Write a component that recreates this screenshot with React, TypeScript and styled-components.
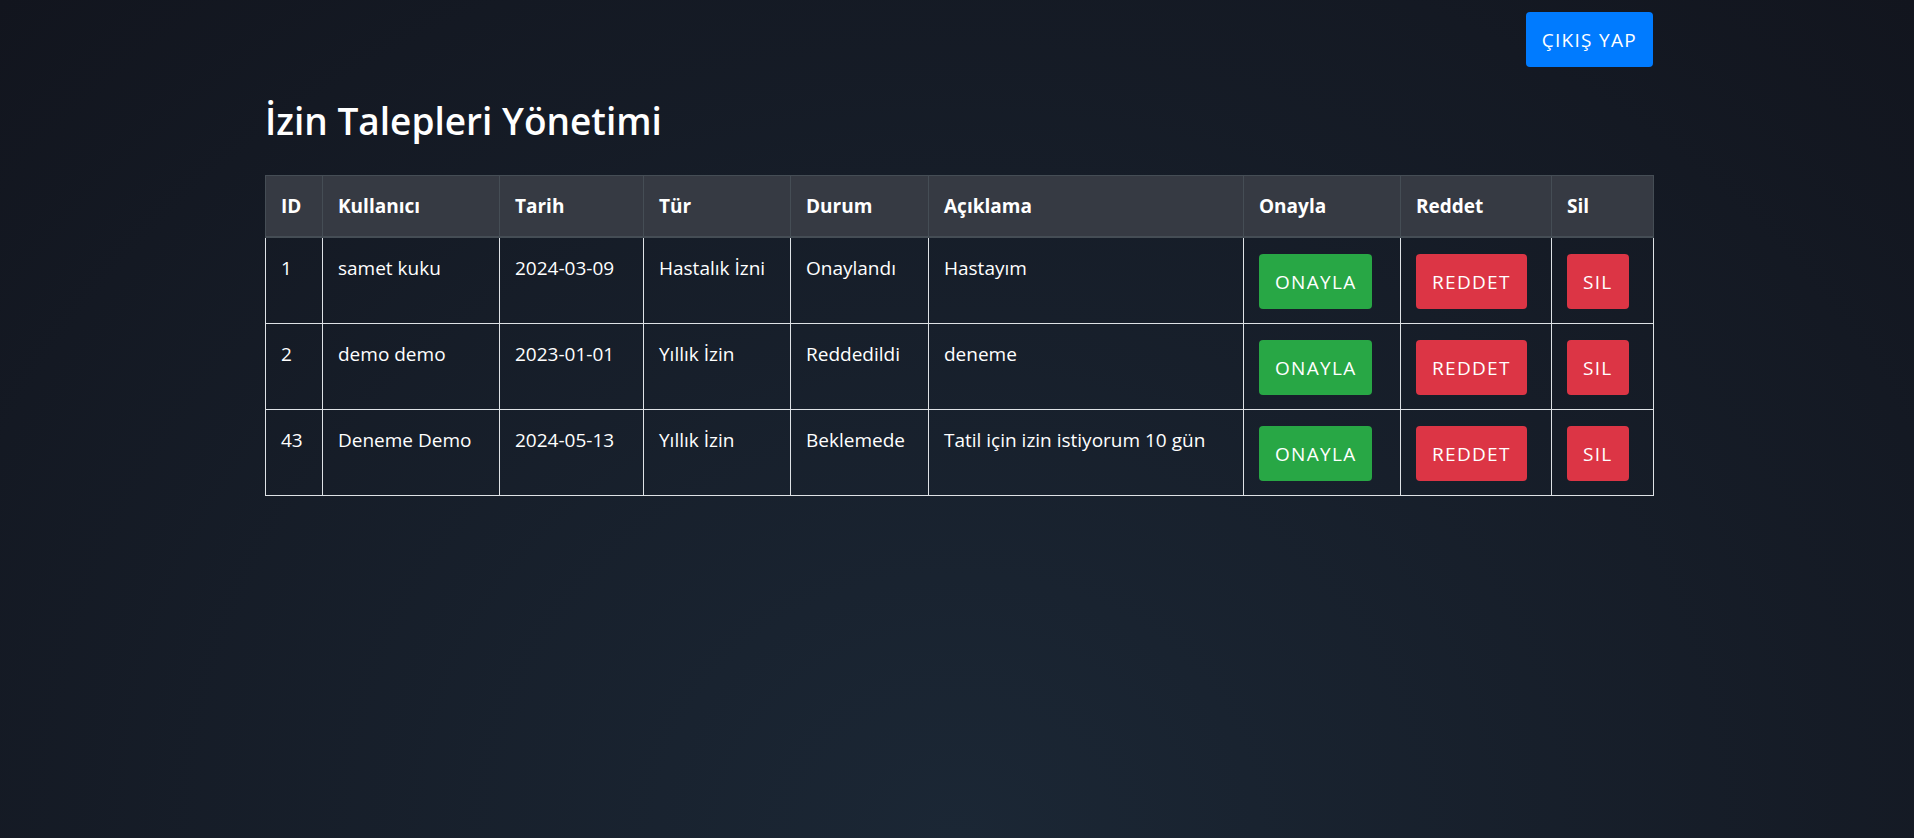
import React from "react";
import styled, { createGlobalStyle } from "styled-components";

const GlobalStyle = createGlobalStyle`
  html, body {
    margin: 0;
    padding: 0;
    min-height: 100%;
  }
  body {
    min-height: 838px;
    background: radial-gradient(ellipse at bottom, #1b2735 0%, #12151e 100%);
    background-attachment: fixed;
    color: #ffffff;
    font-family: "Open Sans", "Noto Sans", "Liberation Sans", sans-serif;
  }
`;

const Page = styled.div`
  width: 1388px;
  margin: 0 auto;
  padding: 12px 0 0 4px;
`;

const TopBar = styled.div`
  display: flex;
  justify-content: flex-end;
`;

const Title = styled.h1`
  margin: 30px 0 30px 0;
  font-size: 37px;
  font-weight: 600;
  line-height: 48px;
  color: #ffffff;
`;

const Table = styled.table`
  width: 1388px;
  border-collapse: collapse;
  table-layout: fixed;
  font-size: 19px;
  line-height: 28px;
`;

const HeadCell = styled.th`
  background: #363a43;
  border: 1px solid #454d55;
  border-bottom: 2px solid #454d55;
  padding: 16px 15px;
  height: 28px;
  text-align: left;
  font-weight: 700;
  color: #ffffff;
  vertical-align: middle;
`;

const Cell = styled.td`
  border: 1px solid #dee2e6;
  padding: 16px 15px 14px;
  height: 55px;
  vertical-align: top;
  color: #ffffff;
  white-space: nowrap;
`;

const Button = styled.button<{ $tone: "blue" | "green" | "red" }>`
  display: inline-flex;
  align-items: center;
  justify-content: center;
  height: 55px;
  padding: 0 16px;
  border: none;
  border-radius: 4px;
  font-family: "Open Sans", "Noto Sans", sans-serif;
  font-size: 19px;
  letter-spacing: 1.3px;
  text-transform: uppercase;
  color: #ffffff;
  cursor: pointer;
  background: ${(p) =>
    p.$tone === "blue" ? "#007bff" : p.$tone === "green" ? "#28a745" : "#dc3545"};
`;

const columns = [
  { label: "ID", width: 57 },
  { label: "Kullanıcı", width: 177 },
  { label: "Tarih", width: 144 },
  { label: "Tür", width: 147 },
  { label: "Durum", width: 138 },
  { label: "Açıklama", width: 315 },
  { label: "Onayla", width: 157 },
  { label: "Reddet", width: 151 },
  { label: "Sil", width: 102 },
];

const rows = [
  { id: 1, user: "samet kuku", date: "2024-03-09", type: "Hastalık İzni", status: "Onaylandı", desc: "Hastayım" },
  { id: 2, user: "demo demo", date: "2023-01-01", type: "Yıllık İzin", status: "Reddedildi", desc: "deneme" },
  { id: 43, user: "Deneme Demo", date: "2024-05-13", type: "Yıllık İzin", status: "Beklemede", desc: "Tatil için izin istiyorum 10 gün" },
];

export default function App() {
  return (
    <>
      <GlobalStyle />
      <Page>
        <TopBar>
          <Button $tone="blue">Çıkış Yap</Button>
        </TopBar>
        <Title>İzin Talepleri Yönetimi</Title>
        <Table>
          <colgroup>
            {columns.map((c) => (
              <col key={c.label} style={{ width: c.width }} />
            ))}
          </colgroup>
          <thead>
            <tr>
              {columns.map((c) => (
                <HeadCell key={c.label}>{c.label}</HeadCell>
              ))}
            </tr>
          </thead>
          <tbody>
            {rows.map((r) => (
              <tr key={r.id}>
                <Cell>{r.id}</Cell>
                <Cell>{r.user}</Cell>
                <Cell>{r.date}</Cell>
                <Cell>{r.type}</Cell>
                <Cell>{r.status}</Cell>
                <Cell>{r.desc}</Cell>
                <Cell>
                  <Button $tone="green">Onayla</Button>
                </Cell>
                <Cell>
                  <Button $tone="red">Reddet</Button>
                </Cell>
                <Cell>
                  <Button $tone="red">Sil</Button>
                </Cell>
              </tr>
            ))}
          </tbody>
        </Table>
      </Page>
    </>
  );
}
